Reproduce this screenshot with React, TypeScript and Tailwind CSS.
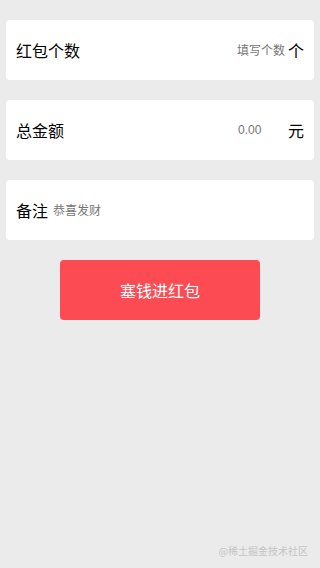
export default function App() {
  const font = { fontFamily: '"Noto Sans CJK SC", "Liberation Sans", sans-serif' };
  return (
    <div className="min-h-[568px] bg-[#ebebeb] px-[6px] pt-[20px] relative" style={font}>
      <div className="flex flex-col gap-[20px]">
        <div className="flex h-[60px] items-center justify-between rounded-[4px] bg-white px-[10px]">
          <span className="text-[16px] text-black">红包个数</span>
          <div className="flex items-center">
            <span className="text-[12px] text-[#757575]">填写个数</span>
            <span className="ml-[3px] text-[16px] text-black">个</span>
          </div>
        </div>
        <div className="flex h-[60px] items-center justify-between rounded-[4px] bg-white px-[10px]">
          <span className="text-[16px] text-black">总金额</span>
          <div className="flex items-center">
            <span className="w-[50px] text-[12px] text-[#757575]" style={{ fontFamily: '"Liberation Sans", sans-serif' }}>0.00</span>
            <span className="text-[16px] text-black">元</span>
          </div>
        </div>
        <div className="flex h-[60px] items-center rounded-[4px] bg-white px-[10px]">
          <span className="text-[16px] text-black">备注</span>
          <span className="ml-[5px] text-[12px] text-[#757575]">恭喜发财</span>
        </div>
      </div>
      <div className="mt-[20px] flex justify-center">
        <button className="h-[60px] w-[200px] rounded-[4px] bg-[#fd4b54] text-[16px] text-white">塞钱进红包</button>
      </div>
      <div className="absolute bottom-[10px] right-[12px] text-[10px] text-[#c4c4c4]">@稀土掘金技术社区</div>
    </div>
  );
}
